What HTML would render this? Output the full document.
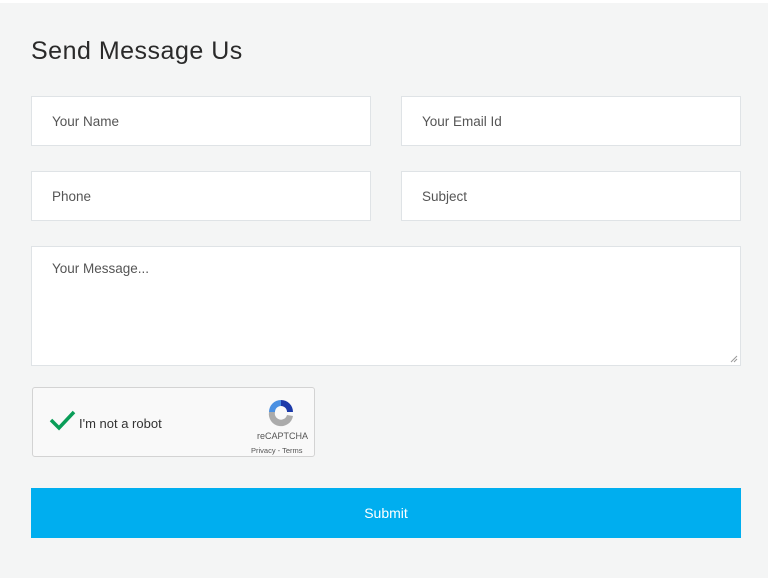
<!DOCTYPE html>
<html><head><style>
body{margin:0;background:#fff;width:772px;height:579px;overflow:hidden;font-family:"Liberation Sans",sans-serif}
.panel{position:absolute;left:0;top:3px;width:768px;height:575px;background:#f4f5f5}
h2{position:absolute;left:31px;top:37px;margin:0;font-weight:normal;font-size:25px;color:#2a2a2a;letter-spacing:0.5px}
.f{position:absolute;background:#fff;border:1px solid #dfe3e6;box-sizing:border-box;font-size:13.5px;color:#555;padding-left:20px}
.cap{position:absolute;left:32px;top:387px;width:283px;height:70px;background:#f9f9f9;border:1px solid #d3d3d3;border-radius:3px;box-sizing:border-box}
.btn{position:absolute;left:31px;top:488px;width:710px;height:50px;background:#00aeef;color:#fff;font-size:14px;text-align:center;line-height:50px}
</style></head><body>
<div class="panel"></div>
<h2>Send Message Us</h2>
<div class="f" style="left:31px;top:96px;width:340px;height:50px;line-height:50px">Your Name</div>
<div class="f" style="left:401px;top:96px;width:340px;height:50px;line-height:50px">Your Email Id</div>
<div class="f" style="left:31px;top:171px;width:340px;height:50px;line-height:50px">Phone</div>
<div class="f" style="left:401px;top:171px;width:340px;height:50px;line-height:50px">Subject</div>
<div class="f" style="left:31px;top:246px;width:710px;height:120px;padding-top:14px">Your Message...
<svg style="position:absolute;right:2px;bottom:2px" width="8" height="8" viewBox="0 0 8 8"><path d="M7 1 L1 7 M7 4 L4 7" stroke="#999" stroke-width="1"/></svg></div>
<div class="cap">
<svg style="position:absolute;left:15px;top:20px" width="28" height="24" viewBox="0 0 28 24"><path d="M3 12 L11 20 L26 4" stroke="#0a9d58" stroke-width="3.5" fill="none"/></svg>
<div style="position:absolute;left:46px;top:28px;font-size:13px;color:#333">I'm not a robot</div>
<svg style="position:absolute;left:232px;top:8px" width="32" height="32" viewBox="0 0 32 32">
<path d="M16 4 A12 12 0 0 1 28 16 L22 16 A6 6 0 0 0 16 10 Z" fill="#1c3aa9"/>
<path d="M4 16 A12 12 0 0 1 16 4 L16 10 A6 6 0 0 0 10 16 Z" fill="#4a90e2"/>
<path d="M4 16 A12 12 0 0 0 28 20 L22 19 A6 6 0 0 1 10 16 Z" fill="#ababab"/>
</svg>
<div style="position:absolute;left:224px;top:43px;font-size:9px;color:#555">reCAPTCHA</div>
<div style="position:absolute;left:218px;top:58px;font-size:7.5px;color:#555">Privacy - Terms</div>
</div>
<div class="btn">Submit</div>
</body></html>
